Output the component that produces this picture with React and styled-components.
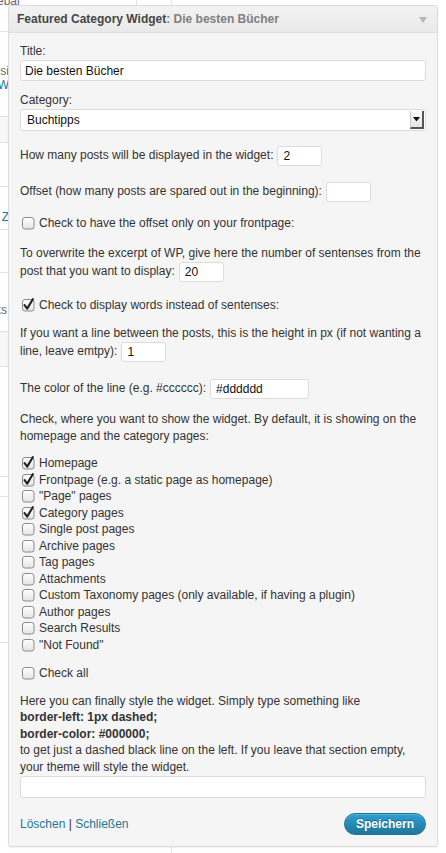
import React from "react";
import styled, { createGlobalStyle } from "styled-components";

const Global = createGlobalStyle`
  html, body { margin: 0; padding: 0; background: #fff; }
  body {
    font-family: "Liberation Sans", Arial, Helvetica, sans-serif;
    font-size: 12px;
    color: #333;
  }
  * { box-sizing: border-box; }
`;

const Stage = styled.div`
  position: relative;
  width: 446px;
  height: 853px;
  overflow: hidden;
  background: #fff;
`;

/* ---------- backdrop (admin page behind the widget) ---------- */
const Backdrop = styled.div`
  display: flex;
  flex-direction: column;
  width: 172px;
  height: 100%;
  border-right: 1px solid #e3e3e3;
`;

const BackRow = styled.div`
  display: flex;
  flex: none;
  height: ${(p) => p.$h}px;
  padding-top: ${(p) => p.$pt || 0}px;
  background: ${(p) => (p.$shade ? "#f7f7f7" : "transparent")};
  border-bottom: ${(p) => (p.$line ? "1px solid #e1e1e1" : "0")};
`;

const BackCell = styled.div`
  display: flex;
  flex: none;
  flex-direction: column;
  align-items: flex-end;
  width: ${(p) => p.$w || 9}px;
  height: 100%;
  overflow: hidden;
  white-space: nowrap;
  font-size: 12px;
  line-height: ${(p) => p.$lh || 14}px;
`;

const BackDivider = styled.div`
  flex: none;
  width: ${(p) => p.$w}px;
  height: 100%;
  border-right: 1px solid #e3e3e3;
`;

const BackLine = styled.span`
  color: ${(p) => (p.$link ? "#21759b" : "#666")};
`;

/* ---------- widget panel ---------- */
const Panel = styled.div`
  position: absolute;
  left: 8px;
  top: 5px;
  width: 430px;
  border: 1px solid #dcdcdc;
  border-radius: 3px;
  background: #f5f5f5;
  box-shadow: 0 1px 2px rgba(0, 0, 0, 0.06);
`;

const Header = styled.div`
  display: flex;
  align-items: center;
  justify-content: space-between;
  height: 27px;
  padding: 0 10px 0 8px;
  border-bottom: 1px solid #dfdfdf;
  border-radius: 3px 3px 0 0;
  background: linear-gradient(#f3f3f3, #e9e9e9);
`;

const HeaderTitle = styled.div`
  font-weight: bold;
  font-size: 12px;
  color: #464646;
  white-space: nowrap;
`;

const HeaderSub = styled.span`
  color: #808080;
`;

const Toggle = styled.span`
  width: 0;
  height: 0;
  border-left: 4px solid transparent;
  border-right: 4px solid transparent;
  border-top: 6px solid #b5b5b5;
  margin-top: 2px;
`;

const Body = styled.div`
  display: flex;
  flex-direction: column;
  padding: 10px 11px 11px 11px;
`;

const Label = styled.label`
  display: block;
  line-height: 16px;
  margin-top: ${(p) => p.$mt || 0}px;
`;

const Para = styled.p`
  margin: ${(p) => (p.$mt !== undefined ? p.$mt : 13)}px 0 0;
  line-height: 16.5px;
  font-weight: ${(p) => (p.$bold ? "bold" : "normal")};
`;

const FieldBox = styled.input`
  display: block;
  width: 100%;
  height: 21px;
  margin-top: 1px;
  padding: 0 4px;
  border: 1px solid #dcdcdc;
  border-radius: 3px;
  background: #fff;
  font-family: inherit;
  font-size: 12px;
  color: #111;
  outline: none;
`;

const SmallInput = styled.input`
  display: inline-block;
  vertical-align: middle;
  width: ${(p) => p.$w}px;
  height: 20px;
  margin: 1px 0 1px 4px;
  padding: 0 5px;
  border: 1px solid #dcdcdc;
  border-radius: 3px;
  background: #fff;
  font-family: inherit;
  font-size: 12px;
  color: #111;
  outline: none;
`;

const Select = styled.div`
  display: flex;
  align-items: center;
  justify-content: space-between;
  height: 22px;
  margin-top: 1px;
  padding: 0 1px 0 6px;
  border: 1px solid #dcdcdc;
  border-radius: 3px;
  background: #fff;
  color: #111;
`;

const SelectButton = styled.span`
  display: flex;
  align-items: center;
  justify-content: center;
  width: 14px;
  height: 18px;
  background: linear-gradient(#fafafa, #e6e6e6);
  border-right: 2px solid #555;
  border-bottom: 2px solid #555;
  border-left: 1px solid #ccc;
`;

const CheckRow = styled.label`
  display: flex;
  align-items: center;
  height: 16.5px;
  margin-top: ${(p) => p.$mt || 0}px;
  padding-left: 2px;
  line-height: 16px;
`;

const CheckText = styled.span`
  margin-left: 4px;
`;

const CheckList = styled.div`
  display: flex;
  flex-direction: column;
  margin-top: 11px;
`;

const TextArea = styled.textarea`
  display: block;
  width: 100%;
  height: 22px;
  margin-top: 1px;
  border: 1px solid #dcdcdc;
  border-radius: 3px;
  background: #fff;
  resize: none;
  outline: none;
`;

const Footer = styled.div`
  display: flex;
  align-items: center;
  justify-content: space-between;
  margin-top: 15px;
  height: 22px;
`;

const Links = styled.div`
  color: #333;
  white-space: nowrap;
`;

const Link = styled.a`
  color: #21759b;
  text-decoration: none;
`;

const SaveButton = styled.button`
  height: 22px;
  width: 82px;
  padding: 0;
  border: 1px solid #21759b;
  border-radius: 11px;
  background: linear-gradient(#2e9fd2, #21759b);
  color: #fff;
  font-family: inherit;
  font-size: 12px;
  font-weight: bold;
  text-shadow: 0 -1px 0 rgba(0, 0, 0, 0.3);
  box-shadow: inset 0 1px 0 rgba(120, 200, 230, 0.5);
`;

function Checkbox({ checked }) {
  return (
    <svg width="13" height="14" viewBox="0 0 13 14" style={{ flex: "none" }}>
      <defs>
        <linearGradient id="cbg" x1="0" y1="0" x2="0" y2="1">
          <stop offset="0" stopColor="#ffffff" />
          <stop offset="1" stopColor="#e4e4e4" />
        </linearGradient>
      </defs>
      <rect x="0.5" y="1.5" width="11.5" height="11.5" rx="2.5" fill="url(#cbg)" stroke="#8a8a8a" />
      {checked && (
        <path
          d="M2.6 7.2 L5.2 10.6 L10.8 1.2"
          fill="none"
          stroke="#222"
          strokeWidth="2.1"
          strokeLinecap="round"
          strokeLinejoin="round"
        />
      )}
    </svg>
  );
}

const pages = [
  ["Homepage", true],
  ["Frontpage (e.g. a static page as homepage)", true],
  ['"Page" pages', false],
  ["Category pages", true],
  ["Single post pages", false],
  ["Archive pages", false],
  ["Tag pages", false],
  ["Attachments", false],
  ["Custom Taxonomy pages (only available, if having a plugin)", false],
  ["Author pages", false],
  ["Search Results", false],
  ['"Not Found"', false],
];

const backRows = [
  { h: 32, line: true, lines: ["Sidebar"], lh: 2, w: 21, divider: 116 },
  { h: 85, line: true, pt: 32, lines: ["Archi si", "Mehr W"], linkFrom: 1 },
  { h: 26, line: true, shade: true },
  { h: 44, line: true },
  { h: 43, line: true, pt: 23, lines: ["Meta Z"], linkFrom: 0 },
  { h: 43, line: true },
  { h: 59, line: true, pt: 30, lines: ["Links"], w: 7 },
  { h: 35, line: true, shade: true },
  { h: 110, line: true },
  { h: 20, line: true },
  { h: 146, line: true },
];

export default function App() {
  return (
    <Stage>
      <Global />
      <Backdrop>
        {backRows.map((r, i) => (
          <BackRow key={i} $h={r.h} $pt={r.pt} $line={r.line} $shade={r.shade}>
            <BackCell $lh={r.lh} $w={r.w}>
              {(r.lines || []).map((t, j) => (
                <BackLine key={j} $link={r.linkFrom !== undefined && j >= r.linkFrom}>
                  {t}
                </BackLine>
              ))}
            </BackCell>
            {r.divider && <BackDivider $w={r.divider} />}
          </BackRow>
        ))}
      </Backdrop>

      <Panel>
        <Header>
          <HeaderTitle>
            Featured Category Widget<HeaderSub>: Die besten Bücher</HeaderSub>
          </HeaderTitle>
          <Toggle />
        </Header>
        <Body>
          <Label>Title:</Label>
          <FieldBox defaultValue="Die besten Bücher" />

          <Label $mt={11}>Category:</Label>
          <Select>
            <span>Buchtipps</span>
            <SelectButton>
              <svg width="7" height="5" viewBox="0 0 7 5">
                <path d="M0 0 H7 L3.5 4.5 Z" fill="#111" />
              </svg>
            </SelectButton>
          </Select>

          <Para $mt={14}>
            How many posts will be displayed in the widget:
            <SmallInput $w={45} defaultValue="2" />
          </Para>
          <Para $mt={14}>
            Offset (how many posts are spared out in the beginning):
            <SmallInput $w={45} defaultValue="" />
          </Para>

          <CheckRow $mt={12}>
            <Checkbox />
            <CheckText>Check to have the offset only on your frontpage:</CheckText>
          </CheckRow>

          <Para>
            To overwrite the excerpt of WP, give here the number of sentenses from the post that
            you want to display:
            <SmallInput $w={45} defaultValue="20" />
          </Para>

          <CheckRow $mt={14}>
            <Checkbox checked />
            <CheckText>Check to display words instead of sentenses:</CheckText>
          </CheckRow>

          <Para $mt={11}>
            If you want a line between the posts, this is the height in px (if not wanting a line,
            leave emtpy):
            <SmallInput $w={45} defaultValue="1" />
          </Para>

          <Para $mt={15}>
            The color of the line (e.g. #cccccc):
            <SmallInput $w={99} defaultValue="#dddddd" />
          </Para>

          <Para $mt={11}>
            Check, where you want to show the widget. By default, it is showing on the homepage and
            the category pages:
          </Para>

          <CheckList>
            {pages.map(([label, on]) => (
              <CheckRow key={label}>
                <Checkbox checked={on} />
                <CheckText>{label}</CheckText>
              </CheckRow>
            ))}
          </CheckList>

          <CheckRow $mt={12}>
            <Checkbox />
            <CheckText>Check all</CheckText>
          </CheckRow>

          <Para $mt={11}>Here you can finally style the widget. Simply type something like</Para>
          <Para $mt={0} $bold>
            border-left: 1px dashed;
          </Para>
          <Para $mt={0} $bold>
            border-color: #000000;
          </Para>
          <Para $mt={0}>
            to get just a dashed black line on the left. If you leave that section empty, your
            theme will style the widget.
          </Para>
          <TextArea />

          <Footer>
            <Links>
              <Link href="#">Löschen</Link> | <Link href="#">Schließen</Link>
            </Links>
            <SaveButton>Speichern</SaveButton>
          </Footer>
        </Body>
      </Panel>
    </Stage>
  );
}
